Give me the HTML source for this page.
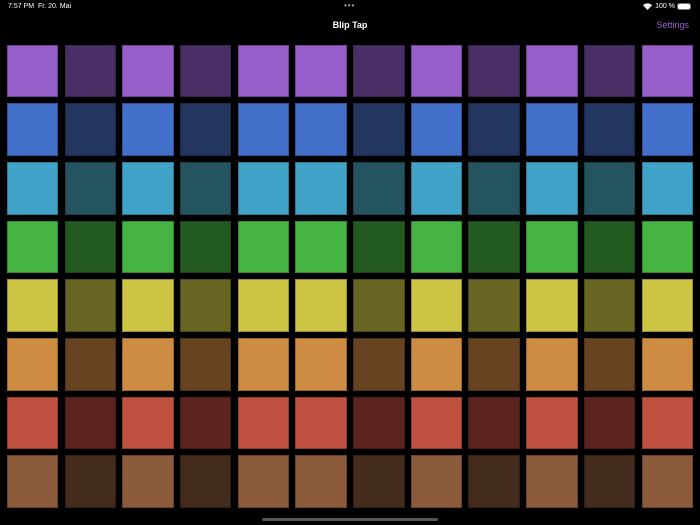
<!DOCTYPE html>
<html><head><style>
body{margin:0;width:700px;height:525px;background:#000;overflow:hidden;position:relative;font-family:"Liberation Sans",sans-serif;color:#fff}
.t{position:absolute;width:51.5px;height:52.5px;box-sizing:border-box;border:1px solid rgba(0,0,0,.25)}
.sb{position:absolute;top:3px;font-size:7px}
</style></head><body>
<div class="sb" style="left:8px">7:57 PM&nbsp;&nbsp;Fr. 20. Mai</div>
<div class="sb" style="left:344px;top:1px;font-size:8px;letter-spacing:1px;color:#aaa">•••</div>
<div class="sb" style="right:10px;display:flex;align-items:center;gap:3px">
<svg width="9" height="7" viewBox="0 0 9 7"><path d="M4.5 7L0 2.2A6.5 6.5 0 0 1 9 2.2Z" fill="#fff"/></svg>100 %
<span style="display:inline-block;width:12px;height:5px;background:#fff;border-radius:1.5px;outline:1px solid #777;outline-offset:0.5px"></span></div>
<div style="position:absolute;top:20px;left:0;width:700px;text-align:center;font-size:9px;font-weight:bold">Blip Tap</div>
<div style="position:absolute;top:20px;right:11px;font-size:9px;color:#9a5fd0">Settings</div>
<div style="position:absolute;left:262px;top:518px;width:176px;height:3px;border-radius:2px;background:#555"></div>
<div id="g"></div>
<script>
var c=[["#955ec8","#4a2f66"],["#426fc9","#22365f"],["#42a3c9","#23545f"],["#46b443","#235a20"],["#cec443","#686421"],["#ce8b42","#674321"],["#c0503f","#5d231f"],["#8b5a3a","#432b1d"]];
var p=[0,1,0,1,0,0,1,0,1,0,1,0],h="";
for(var r=0;r<8;r++)for(var k=0;k<12;k++){h+='<div class="t" style="left:'+(6.8+k*57.7).toFixed(1)+'px;top:'+(44.7+r*58.66).toFixed(1)+'px;background:'+c[r][p[k]]+'"></div>';}
document.getElementById("g").innerHTML=h;
</script>
</body></html>
